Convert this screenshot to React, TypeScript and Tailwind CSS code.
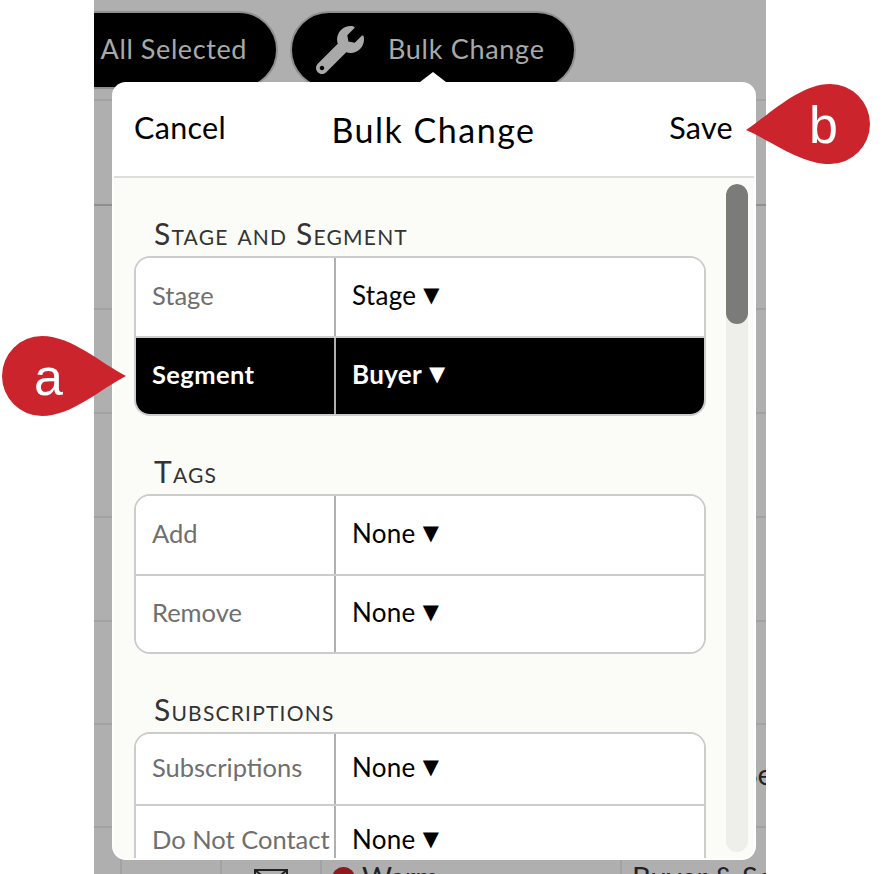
import { FaWrench } from "react-icons/fa";

const font = "font-['Lato','Liberation_Sans',sans-serif]";

type Row = { label: string; value: string; height: string; active?: boolean };

const sections: { title: string; rows: Row[] }[] = [
  {
    title: "Stage and Segment",
    rows: [
      { label: "Stage", value: "Stage", height: "h-[78px]" },
      { label: "Segment", value: "Buyer", height: "h-[76px]", active: true },
    ],
  },
  {
    title: "Tags",
    rows: [
      { label: "Add", value: "None", height: "h-[78px]" },
      { label: "Remove", value: "None", height: "h-[76px]" },
    ],
  },
  {
    title: "Subscriptions",
    rows: [
      { label: "Subscriptions", value: "None", height: "h-[70px]" },
      { label: "Do Not Contact", value: "None", height: "h-[70px]" },
    ],
  },
];

function BackgroundRow({
  height,
  dark,
  showType,
  showCells,
}: {
  height: string;
  dark?: boolean;
  showType?: boolean;
  showCells?: boolean;
}) {
  return (
    <div className={`grid grid-cols-[26px_100px_100px_300px_146px] border-b-2 ${height} ${dark ? "border-[#8f8f8f]" : "border-[#a2a2a2]"}`}>
      <div />
      <div className="border-l-2 border-[#a2a2a2]" />
      <div className="border-l-2 border-[#a2a2a2] flex justify-center pt-[41px]">
        {showCells && (
          <svg width="34" height="24" viewBox="0 0 34 24" fill="none" stroke="#222" strokeWidth="2">
            <rect x="1" y="1" width="32" height="22" />
            <path d="M1 1l16 13L33 1" />
          </svg>
        )}
      </div>
      <div className="border-l-2 border-[#a2a2a2] flex items-start gap-[7px] pl-[10px] pt-[29px] text-[29px] leading-[40px] text-[#222]">
        {showCells && (
          <>
            <span className="mt-[10px] h-[23px] w-[23px] shrink-0 rounded-full bg-[#8e1a1f]" />
            <span>Warm</span>
          </>
        )}
      </div>
      <div className="border-l-2 border-[#a2a2a2] pl-[10px] pt-[29px] text-[29px] leading-[40px] text-[#222] whitespace-nowrap overflow-hidden">
        {showType && "Buyer & Seller"}
      </div>
    </div>
  );
}

function Section({ title, rows }: { title: string; rows: Row[] }) {
  return (
    <section>
      <h2 className="h-[36px] pl-[20px] mb-[3px] text-[30px] leading-[32px] tracking-[1.2px] text-[#333] [font-variant:small-caps]">
        {title}
      </h2>
      <div className="rounded-[16px] border-2 border-[#cccccc] overflow-hidden bg-white divide-y-2 divide-[#cccccc]">
        {rows.map((row) => (
          <div
            key={row.label}
            className={`flex box-content ${row.height} ${row.active ? "bg-black text-white font-bold" : "bg-white text-black"}`}
          >
            <div
              className={`w-[200px] shrink-0 border-r-2 border-[#b0b0b0] pl-[16px] pb-[3px] flex items-center text-[25.5px] whitespace-nowrap ${row.active ? "text-white tracking-[0.4px]" : "text-[#6f6f6f]"}`}
            >
              {row.label}
            </div>
            <div className="flex items-center gap-[7px] pl-[16px] pb-[3px] text-[26px] tracking-[0.3px]">
              <span>{row.value}</span>
              <span className="text-[21px] font-['DejaVu_Sans',sans-serif] font-normal">▼</span>
            </div>
          </div>
        ))}
      </div>
    </section>
  );
}

function Callout({ letter, className, flip }: { letter: string; className: string; flip?: boolean }) {
  return (
    <div className={`absolute h-[80px] w-[124px] ${className}`}>
      <svg viewBox="0 0 124 80" className={`h-full w-full ${flip ? "-scale-x-100" : ""}`}>
        <path
          d={flip ? "M124 46C100 56 70 80 40 80A40 40 0 0 1 40 0C70 0 100 30 124 46Z" : "M124 40C100 52 70 80 40 80A40 40 0 0 1 40 0C70 0 100 28 124 40Z"}
          fill="#cc242c"
        />
      </svg>
      <span
        className={`absolute top-[8px] text-[52px] leading-[66px] text-white font-['Liberation_Sans',sans-serif] ${flip ? "right-[32px]" : "left-[32px]"}`}
      >
        {letter}
      </span>
    </div>
  );
}

export default function App() {
  return (
    <div className={`relative h-[874px] w-[896px] overflow-hidden bg-white ${font}`}>
      <div className="ml-[94px] h-[874px] w-[672px] overflow-hidden bg-[#afafaf]">
        {/* Toolbar behind the dialog */}
        <div className="flex h-[101px] gap-[12px] border-b-2 border-[#a2a2a2] pt-[11px]">
          <div className="-ml-[40px] flex h-[78px] w-[224px] items-center justify-end rounded-full border-2 border-[#8f8f8f] bg-black pb-[2px] pr-[29px] text-[27px] tracking-[0.6px] text-[#a9a9a9]">
            All Selected
          </div>
          <div className="flex h-[78px] w-[286px] items-center gap-[24px] rounded-full border-2 border-[#8f8f8f] bg-black pl-[24px] text-[27px] tracking-[0.7px] text-[#a9a9a9]">
            <FaWrench className="h-[48px] w-[48px] shrink-0" />
            <span className="pb-[2px]">Bulk Change</span>
          </div>
        </div>
        <BackgroundRow height="h-[105px]" dark />
        <BackgroundRow height="h-[104px]" />
        <BackgroundRow height="h-[104px]" />
        <BackgroundRow height="h-[104px]" />
        <BackgroundRow height="h-[104px]" />
        <BackgroundRow height="h-[103px]" />
        <BackgroundRow height="h-[103px]" showType />
        <BackgroundRow height="h-[104px]" showType showCells />
      </div>

      {/* Dialog */}
      <div className="absolute left-[112px] top-[82px] h-[778px] w-[644px]">
        <div className="absolute -top-[10px] left-[308px] h-0 w-0 border-x-[13px] border-b-[10px] border-x-transparent border-b-white" />
        <div className="flex h-full flex-col overflow-hidden rounded-[14px] bg-white p-[2px]">
          <header className="grid h-[94px] shrink-0 grid-cols-[1fr_auto_1fr] items-center border-b-2 border-[#dddddd] pl-[20px] pr-[21px] text-black">
            <button className="mb-[5px] justify-self-start text-[30.5px] tracking-[0.3px]">Cancel</button>
            <h1 className="pb-[2px] text-[34px] tracking-[1.5px]">Bulk Change</h1>
            <button className="mb-[5px] justify-self-end text-[30.5px] tracking-[0.3px]">Save</button>
          </header>
          <div className="flex min-h-0 flex-1 overflow-hidden rounded-b-[12px] bg-[#fbfbf7]">
            <div className="flex w-[612px] shrink-0 flex-col gap-[39px] px-[20px] pt-[39px]">
              {sections.map((s) => (
                <Section key={s.title} title={s.title} rows={s.rows} />
              ))}
            </div>
            <div className="my-[6px] h-[668px] w-[22px] shrink-0 overflow-hidden rounded-full bg-[#eeefeb]">
              <div className="h-[140px] rounded-full bg-[#7b7b79]" />
            </div>
          </div>
        </div>
      </div>

      <Callout letter="a" className="left-[2px] top-[336px]" />
      <Callout letter="b" flip className="left-[746px] top-[84px]" />
    </div>
  );
}
